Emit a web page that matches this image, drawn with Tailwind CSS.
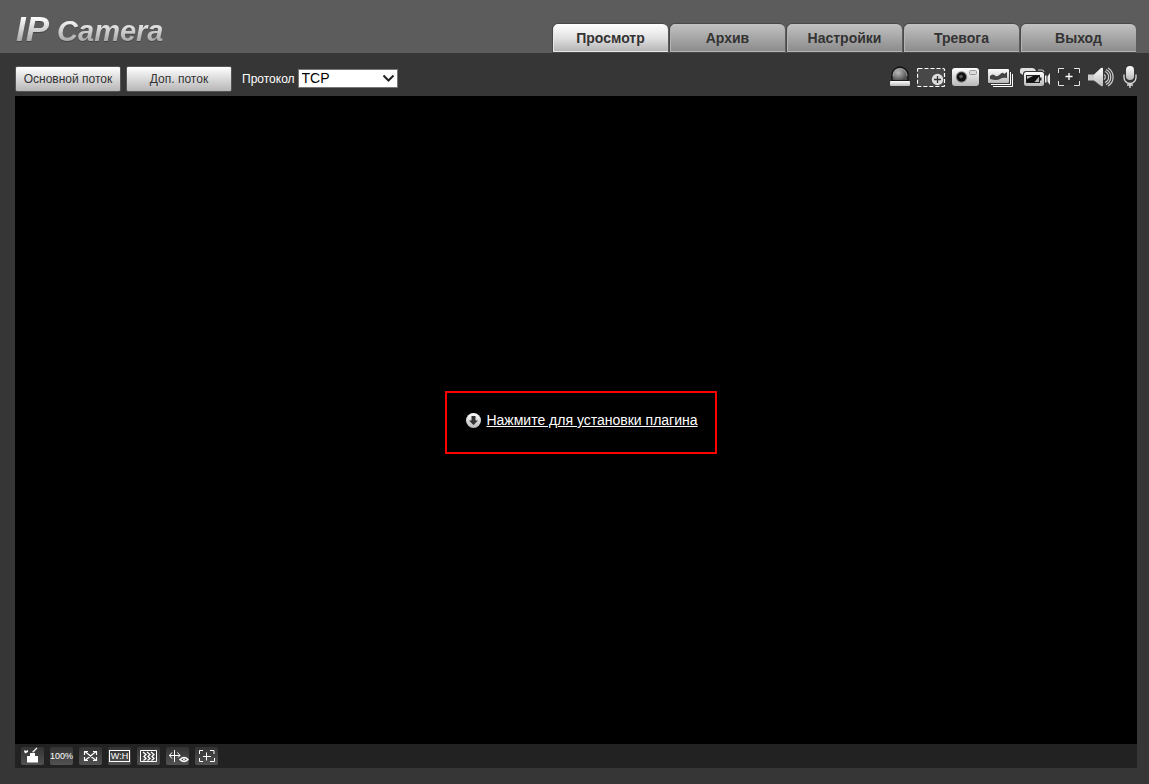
<!DOCTYPE html>
<html lang="ru">
<head>
<meta charset="utf-8">
<meta name="viewport" content="width=device-width, initial-scale=1">
<title>IP Camera</title>
<script src="https://cdn.jsdelivr.net/npm/@tailwindcss/browser@4"></script>
</head>
<body class="flex min-h-screen flex-col bg-[#363636] font-['Liberation_Sans',Arial,sans-serif] text-xs text-white">
<svg class="absolute size-0" aria-hidden="true">
  <defs>
    <linearGradient id="metal" x1="0" y1="0" x2="0" y2="1"><stop offset="0" stop-color="#fff"/><stop offset="1" stop-color="#b8b8b8"/></linearGradient>
    <radialGradient id="dome" cx=".38" cy=".4" r=".6"><stop offset="0" stop-color="#bbb"/><stop offset="1" stop-color="#4c4c4c"/></radialGradient>
  </defs>
</svg>

<header class="flex h-[53px] items-end justify-between bg-[#5c5c5c] pr-[13px] pl-4">
  <h1 class="flex items-baseline gap-1 pb-1 font-bold italic drop-shadow-[0_1px_0_#444]">
    <span class="bg-linear-to-b from-white from-20% to-[#ababab] to-80% bg-clip-text pr-1 text-[35px] leading-[40px] text-transparent">IP</span>
    <span class="bg-linear-to-b from-white from-10% to-[#ababab] to-80% bg-clip-text pr-1 text-[29px] leading-[32px] text-transparent">Camera</span>
  </h1>
  <nav class="flex gap-px text-sm font-bold text-[#333]">
    <a href="#" aria-current="page" class="flex h-[30px] w-[116px] items-center justify-center rounded-t-md border border-r-0 border-[#484848] bg-linear-to-b from-white via-[#e2e2e2] to-[#b4b2b3] shadow-[inset_1px_-1px_0_#e8e8e8]">Просмотр</a>
    <a href="#" class="flex h-[30px] w-[116px] items-center justify-center rounded-t-md border border-r-0 border-[#484848] bg-linear-to-b from-[#c2c2c2] via-[#a6a6a6] to-[#8c8a8b] shadow-[inset_1px_-1px_0_#b4b4b4]">Архив</a>
    <a href="#" class="flex h-[30px] w-[116px] items-center justify-center rounded-t-md border border-r-0 border-[#484848] bg-linear-to-b from-[#c2c2c2] via-[#a6a6a6] to-[#8c8a8b] shadow-[inset_1px_-1px_0_#b4b4b4]">Настройки</a>
    <a href="#" class="flex h-[30px] w-[116px] items-center justify-center rounded-t-md border border-r-0 border-[#484848] bg-linear-to-b from-[#c2c2c2] via-[#a6a6a6] to-[#8c8a8b] shadow-[inset_1px_-1px_0_#b4b4b4]">Тревога</a>
    <a href="#" class="flex h-[30px] w-[116px] items-center justify-center rounded-t-md border border-r-0 border-[#484848] bg-linear-to-b from-[#c2c2c2] via-[#a6a6a6] to-[#8c8a8b] shadow-[inset_1px_-1px_0_#b4b4b4]">Выход</a>
  </nav>
</header>

<main class="flex flex-1 flex-col pr-3 pb-4 pl-[15px]">
  <div class="flex h-[43px] items-center justify-between pt-2">
    <div class="flex items-center">
      <button type="button" class="h-[26px] w-[106px] rounded-xs border border-[#555] bg-linear-to-b from-white to-[#b8b6b7] text-[#333]">Основной поток</button>
      <button type="button" class="ml-[5px] h-[26px] w-[106px] rounded-xs border border-[#555] bg-linear-to-b from-white to-[#b8b6b7] text-[#333]">Доп. поток</button>
      <label for="protocol" class="ml-[10px]">Протокол</label>
      <span class="ml-[3px] grid items-center">
        <select id="protocol" class="col-start-1 row-start-1 h-[19px] w-[100px] appearance-none border border-[#777] bg-white pb-px pl-[3px] text-sm leading-4 text-black"><option>TCP</option><option>UDP</option></select>
        <svg class="pointer-events-none col-start-1 row-start-1 mr-[3px] justify-self-end" width="13" height="9" viewBox="0 0 13 9" fill="none" stroke="#222" stroke-width="2"><path d="M1.5 1.5l5 5 5-5"/></svg>
      </span>
    </div>

    <div class="flex items-center gap-[6px] pb-1">
      <button type="button" aria-label="Тревожный выход">
        <svg width="22" height="22" viewBox="0 0 22 22"><path d="M3 15V9a8 8 0 0116 0v6z" fill="url(#dome)" stroke="#111" stroke-width="1.3"/><path d="M4 10a7 7 0 0114 0" fill="none" stroke="#b5b5b5" stroke-width=".7"/><rect x="1" y="15" width="20" height="5" rx="1" fill="url(#metal)"/></svg>
      </button>
      <button type="button" aria-label="Цифровое увеличение">
        <svg width="29" height="22" viewBox="0 0 29 22"><rect x=".5" y="2.5" width="27" height="18" rx="1" fill="#484848" stroke="#fff" stroke-width="1.2" stroke-dasharray="4 2"/><circle cx="20.5" cy="13.5" r="5.7" fill="#ddd"/><path d="M17 13.5h7M20.5 10v7" stroke="#333" stroke-width="1.3"/></svg>
      </button>
      <button type="button" aria-label="Снимок">
        <svg width="28" height="22" viewBox="0 0 28 22"><rect x="0" y="2" width="27" height="18" rx="3" fill="url(#metal)"/><circle cx="9.5" cy="11" r="5.8" fill="#888"/><circle cx="9.5" cy="11" r="4.7" fill="#111"/><circle cx="9" cy="10.5" r="1.8" fill="#5b5b5b"/><rect x="17.500" y="4.500" width="7" height="4" rx="1" fill="#ddd" stroke="#999"/></svg>
      </button>
      <button type="button" aria-label="Серия снимков" class="ml-[2px]">
        <svg width="26" height="22" viewBox="0 0 26 22"><path d="M22.500 6v12.500H3M24.500 8v12.500H5" fill="none" stroke="#fff"/><rect x="0" y="3" width="21" height="14" rx="1" fill="url(#metal)"/><path d="M2 10q3-3 5.500 0 2 1 5-2 2.500-2.500 3.500 0l3-2v6q-4-1-7 1t-10 0z" fill="#444"/></svg>
      </button>
      <button type="button" aria-label="Запись">
        <svg width="31" height="22" viewBox="0 0 31 22"><path d="M0 7V4q0-2 2-2h10q3 0 4 3H6q-3 0-3 3v1z" fill="#e0e0e0"/><path d="M18 4h4q2 0 2 2" fill="none" stroke="#ccc"/><rect x="4" y="6" width="20" height="14" rx="2.5" fill="url(#metal)"/><rect x="6.500" y="9.500" width="13" height="7" fill="#bbb" stroke="#222"/><path d="M20 11.500h1.500v3H20z" fill="#222"/><path d="M7 16.500V13l7-3.500h6L14 16.500z" fill="#111"/><path d="M25 9.500h1.500v7H25zM27.500 10.500L30 7v12l-2.500-3.500z" fill="#eee"/></svg>
      </button>
      <button type="button" aria-label="Помощь в фокусировке">
        <svg width="24" height="22" viewBox="0 0 24 22"><rect x="2" y="3" width="20" height="16" fill="#303030"/><path d="M1.500 7V2.500H7M17 2.500h5.500V7M22.500 15v4.500H17M7 19.500H1.500V15" fill="none" stroke="#e5e5e5"/><path d="M8.500 10.500h7M12 7v7" stroke="#fff" stroke-width="1.3"/></svg>
      </button>
      <button type="button" aria-label="Звук">
        <svg width="28" height="22" viewBox="0 0 28 22"><path d="M1 8.500h6v6H1z" fill="#ccc"/><path d="M7 8.500L14 2q2-1 2 1v16q0 2-2 1l-7-5.500z" fill="url(#metal)"/><path d="M17 8.500a3 3 0 010 5M18 5.500a6 6 0 010 11M19 3.500a8.300 8.300 0 010 15M21 2a10.500 10.500 0 010 18" fill="none" stroke="#d0d0d0" stroke-width="1.2"/></svg>
      </button>
      <button type="button" aria-label="Микрофон" class="ml-[2px]">
        <svg width="14" height="22" viewBox="0 0 14 22"><rect x="3" y="0" width="8" height="14" rx="4" fill="url(#metal)"/><path d="M1 8.500v3a6 6 0 0012 0v-3M7 17.500V22M4 19h6" fill="none" stroke="#ddd" stroke-width="1.3"/></svg>
      </button>
    </div>
  </div>

  <section class="flex flex-1 items-center justify-center bg-black pt-[5px] pl-[10px]">
    <div class="flex h-[63px] items-center border-2 border-[#f00] pr-[17px] pb-[5px] pl-[19px]">
      <a href="#" class="flex items-center gap-[5px] text-sm leading-4">
        <svg width="15" height="15" viewBox="0 0 15 15"><circle cx="7.5" cy="7.5" r="7.5" fill="url(#metal)"/><path d="M5.500 3h4v4.500h2.500L7.500 12 3 7.500h2.500z" fill="#333"/></svg>
        <span class="underline">Нажмите для установки плагина</span>
      </a>
    </div>
  </section>

  <footer class="flex h-6 items-center gap-[6px] bg-[#222] pl-[6px]">
    <button type="button" aria-label="Настройка изображения" class="grid h-[18px] w-[23px] place-items-center rounded-xs bg-linear-to-b from-[#333] to-[#525252]">
      <svg width="23" height="18" viewBox="0 0 23 18" fill="#fff"><path d="M6 9h3V6h5v3h3v6.500H6z"/><path d="M3 4l1-1 1 1 2-1v2L4 6.500zM11 5l4.500-4.500 1 .7L12.500 5.500z"/></svg>
    </button>
    <button type="button" class="flex h-[18px] w-[23px] items-center justify-center rounded-xs bg-linear-to-b from-[#333] to-[#525252] text-[9px] leading-none">100%</button>
    <button type="button" aria-label="Полный экран" class="grid h-[18px] w-[23px] place-items-center rounded-xs bg-linear-to-b from-[#333] to-[#525252]">
      <svg width="23" height="18" viewBox="0 0 23 18" fill="none" stroke="#fff" stroke-width="1.2"><path d="M6 4.500l11 9M17 4.500l-11 9M5.500 8V4.500H9M14 4.500h3.500V8M17.500 10v3.500H14M9 13.500H5.500V10"/></svg>
    </button>
    <button type="button" class="grid h-[18px] w-[23px] place-items-center rounded-xs bg-linear-to-b from-[#333] to-[#525252] text-[9px] leading-none"><span class="flex h-[12px] w-[21px] items-center justify-center border border-white">W:H</span></button>
    <button type="button" aria-label="Плавность" class="grid h-[18px] w-[23px] place-items-center rounded-xs bg-linear-to-b from-[#333] to-[#525252]">
      <svg width="23" height="18" viewBox="0 0 23 18" fill="none" stroke="#fff"><path d="M3.500 3.500h16v11h-16z"/><path d="M6 5l3 2.500-2 2 2 2-2.500 2M10 5l3 2.500-2 2 2 2-2.500 2M14 5l3 2.500-2 2 2 2-2.500 2" stroke-width="1.3"/></svg>
    </button>
    <button type="button" aria-label="Информация о правилах" class="grid h-[18px] w-[23px] place-items-center rounded-xs bg-linear-to-b from-[#333] to-[#525252]">
      <svg width="23" height="18" viewBox="0 0 23 18" fill="none" stroke="#fff"><path d="M8.500 3v12M3 8.500h11M6 5.500l-2.500 3 2.500 3M11.500 5.500l2.500 3-2 2"/><path d="M14 12.500q4-4 8 0-4 4-8 0z" stroke-width="1.5"/><circle cx="18" cy="12.500" r="1" fill="#fff" stroke="none"/></svg>
    </button>
    <button type="button" aria-label="Фокусировка" class="grid h-[18px] w-[23px] place-items-center rounded-xs bg-linear-to-b from-[#333] to-[#525252]">
      <svg width="23" height="18" viewBox="0 0 23 18" fill="none" stroke="#fff"><path d="M8 3.500H4.500V7M15 3.500h4V7M19.500 11v3.500H15M8 14.500H4.500V11M8 9.500h8M11.500 5.500v8"/></svg>
    </button>
  </footer>
</main>
</body>
</html>
